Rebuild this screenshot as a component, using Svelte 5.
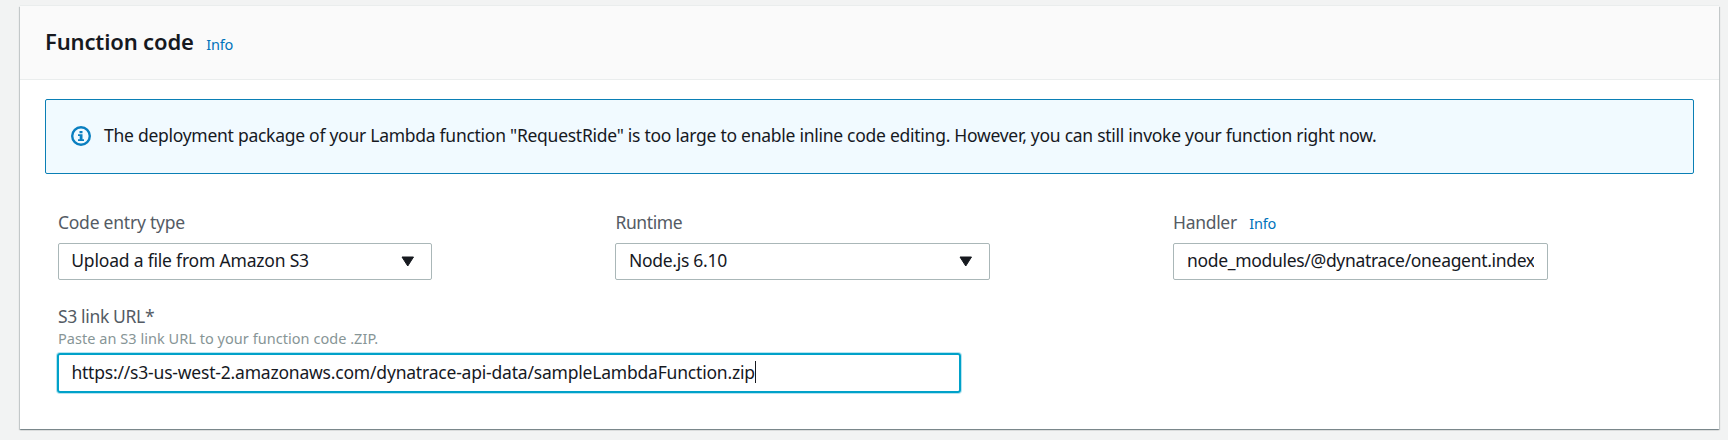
<script>
  const message =
    'The deployment package of your Lambda function "RequestRide" is too large to enable inline code editing. However, you can still invoke your function right now.';
</script>

{#snippet caret()}
  <svg class="arrow" width="14" height="11" viewBox="0 0 14 11"><path d="M1 1h11.500l-5.750 9z" fill="#16191f" stroke="#16191f" stroke-linejoin="round" /></svg>
{/snippet}

<main>
  <section class="card">
    <header>
      <h2>Function code</h2>
      <a class="info">Info</a>
    </header>
    <div class="body">
      <div class="alert">
        <svg width="20" height="20" viewBox="0 0 20 20">
          <circle cx="10" cy="10" r="8.800" fill="none" stroke="#0a7fc0" stroke-width="2.400" />
          <path d="M8.500 5h3v2.200h-3zM7 8.300h4.500v4.900H13V15H7v-1.800h1.700v-3.100H7z" fill="#0a7fc0" />
        </svg>
        <span class="message">{message}</span>
      </div>
      <div class="grid">
        <div class="field">
          <div class="label"><span class="l1">Code entry type</span></div>
          <div class="control"><span class="v1">Upload a file from Amazon S3</span>{@render caret()}</div>
        </div>
        <div class="field">
          <div class="label"><span class="l2">Runtime</span></div>
          <div class="control"><span class="v2">Node.js 6.10</span>{@render caret()}</div>
        </div>
        <div class="field">
          <div class="label"><span class="l3">Handler</span><a class="info">Info</a></div>
          <div class="control input"><span class="v3">node_modules/@dynatrace/oneagent.index</span></div>
        </div>
      </div>
      <div class="s3">
        <div class="label"><span class="l4">S3 link URL*</span></div>
        <div class="hint"><span>Paste an S3 link URL to your function code .ZIP.</span></div>
        <div class="control focused"><span class="v4">https://s3-us-west-2.amazonaws.com/dynatrace-api-data/sampleLambdaFunction.zip</span><i></i></div>
      </div>
    </div>
  </section>
</main>

<style>
  :global(body) { margin: 0; background: #f2f3f3; }
  main {
    box-sizing: border-box;
    width: 1728px;
    height: 440px;
    padding: 6px 9px 11px 20px;
    overflow: hidden;
    background: #f2f3f3;
    font-family: "Noto Sans", "Open Sans", sans-serif;
    font-size: 17.500px;
    letter-spacing: -0.270px;
    color: #16191f;
    white-space: nowrap;
  }
  .card {
    height: 423px;
    background: #fff;
    box-shadow: 0 -1px 0 0 #eaeded, 0 1px 1px 0 rgba(0, 28, 36, 0.3), 1px 1px 1px 0 rgba(0, 28, 36, 0.15), -1px 1px 1px 0 rgba(0, 28, 36, 0.15);
  }
  header {
    box-sizing: border-box;
    height: 74px;
    padding: 0 25px;
    display: flex;
    align-items: baseline;
    background: #fafafa;
    border-bottom: 1px solid #eaeded;
  }
  h2 { margin: 0; font-size: 22px; line-height: 70px; font-weight: 600; letter-spacing: -0.150px; }
  .info { color: #0073bb; font-size: 14.500px; margin-left: 12.500px; letter-spacing: -0.250px; }
  .body { padding: 19px 25px 0; }
  .alert {
    box-sizing: border-box;
    height: 75px;
    border: 1px solid #0a7fb5;
    border-radius: 2px;
    background: #f1faff;
    display: flex;
    align-items: center;
    padding: 0 25px 2px;
    gap: 13px;
  }
  .message { letter-spacing: -0.268px; padding-bottom: 1px; }
  .l1 { letter-spacing: -0.220px; }
  .l2 { letter-spacing: -0.420px; }
  .l3 { letter-spacing: -0.320px; }
  .l4 { letter-spacing: -0.350px; }
  .v1 { letter-spacing: -0.200px; }
  .v2 { letter-spacing: -0.270px; }
  .v3 { padding-left: 0.600px; letter-spacing: -0.320px; }
  .v4 { letter-spacing: -0.200px; }
  .grid {
    display: grid;
    grid-template-columns: repeat(3, 374.600px);
    column-gap: 183px;
    padding: 36px 0 0 12.900px;
  }
  .label {
    height: 33px;
    line-height: 25px;
    display: flex;
    align-items: baseline;
    color: #545b64;
  }
  .control {
    box-sizing: border-box;
    height: 37px;
    border: 1px solid #aab7b8;
    border-radius: 2px;
    padding: 0 16px 2px 12.400px;
    display: flex;
    align-items: center;
    justify-content: space-between;
  }
  .grid .control span { padding-bottom: 1px; }
  .arrow { margin-top: 1px; }
  .input { padding-right: 13px; }
  .input span { overflow: hidden; }
  .s3 { width: 904px; padding: 24px 0 0 12px; }
  .s3 .label { height: 24px; padding-left: 1px; }
  .hint { height: 25px; line-height: 20px; padding-left: 1px; font-size: 14.500px; letter-spacing: 0.040px; color: #879596; }
  .focused {
    height: 40px;
    border: 2px solid #00a1c9;
    border-radius: 3px;
    box-shadow: 0 0 0 1px #b5e4f0;
    justify-content: flex-start;
  }
  .focused i { width: 1px; height: 22px; background: #16191f; }
</style>
